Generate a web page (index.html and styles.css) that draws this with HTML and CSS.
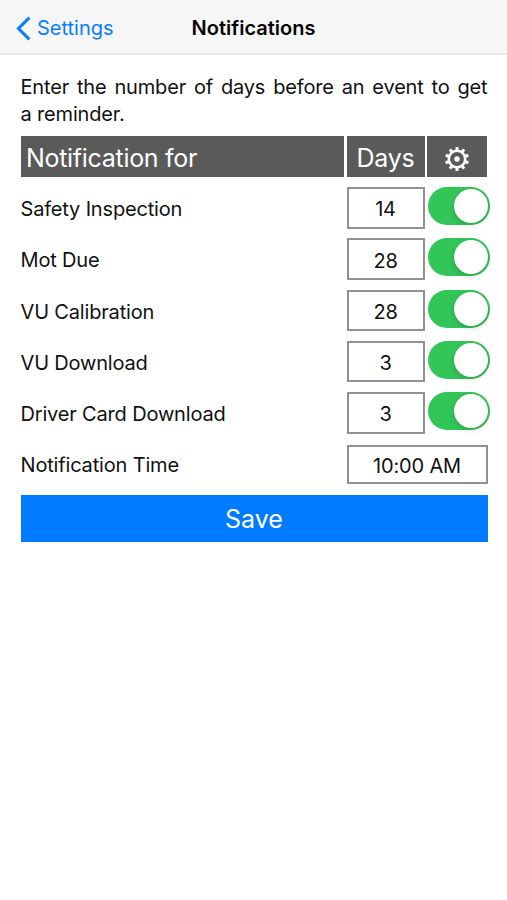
FILE: index.html
```html
<!DOCTYPE html>
<html lang="en">
<head>
<meta charset="utf-8">
<meta name="viewport" content="width=device-width, initial-scale=1">
<title>Notifications</title>
<link rel="stylesheet" href="styles.css">
</head>
<body>
<header class="navbar">
  <a class="back"><svg class="chevron" viewBox="0 0 17 28"><path d="M14.2 2.4 2.6 14l11.6 11.6"/></svg><span>Settings</span></a>
  <h1 class="title">Notifications</h1>
</header>
<main class="content">
  <p class="intro">Enter the number of days before an event to get a&nbsp;reminder.</p>
  <div class="head">
    <div class="cell cell-name">Notification for</div>
    <div class="cell">Days</div>
    <div class="cell">
      <svg class="gear" viewBox="-13 -13 26 26">
        <circle class="ring" r="8.2"/>
        <circle class="hub" r="2.8"/>
        <g class="teeth">
          <path id="tooth" d="M0-8.8V-12"/>
          <use href="#tooth" transform="rotate(36)"/>
          <use href="#tooth" transform="rotate(72)"/>
          <use href="#tooth" transform="rotate(108)"/>
          <use href="#tooth" transform="rotate(144)"/>
          <use href="#tooth" transform="rotate(180)"/>
          <use href="#tooth" transform="rotate(216)"/>
          <use href="#tooth" transform="rotate(252)"/>
          <use href="#tooth" transform="rotate(288)"/>
          <use href="#tooth" transform="rotate(324)"/>
        </g>
      </svg>
    </div>
  </div>
  <div class="rows">
    <div class="row"><span class="label">Safety Inspection</span><div class="box">14</div><div class="switch"><i class="knob"></i></div></div>
    <div class="row"><span class="label">Mot Due</span><div class="box">28</div><div class="switch"><i class="knob"></i></div></div>
    <div class="row"><span class="label">VU Calibration</span><div class="box">28</div><div class="switch"><i class="knob"></i></div></div>
    <div class="row"><span class="label">VU Download</span><div class="box">3</div><div class="switch"><i class="knob"></i></div></div>
    <div class="row"><span class="label">Driver Card Download</span><div class="box">3</div><div class="switch"><i class="knob"></i></div></div>
    <div class="row row-time"><span class="label">Notification Time</span><div class="box box-time">10:00 AM</div></div>
  </div>
  <button class="save">Save</button>
</main>
</body>
</html>
```
FILE: styles.css
```css
* { box-sizing: border-box; }
body {
  margin: 0;
  background: #fff;
  color: #111;
  font: 20px/27px Inter, "Liberation Sans", sans-serif;
  letter-spacing: -0.17px;
}
.navbar {
  display: grid;
  grid-template-columns: 1fr auto 1fr;
  align-items: center;
  height: 55px;
  padding: 3px 16px 0;
  background: #f7f6f7;
  border-bottom: 2px solid #e9e9ea;
}
.back {
  display: flex;
  align-items: center;
  gap: 5px;
  color: #087dff;
  letter-spacing: 0;
}
.chevron {
  width: 16px;
  height: 27px;
  fill: none;
  stroke: #087dff;
  stroke-width: 3.2;
}
.title {
  margin: 0;
  font-size: 20px;
  font-weight: 600;
  color: #050505;
  letter-spacing: 0;
}
.content { padding: 19px 19.5px 0 20.5px; }
.intro {
  margin: 0 0 8px;
  text-align: justify;
}
.head {
  display: grid;
  grid-template-columns: 323.5px 78px 60px;
  gap: 2.5px;
  height: 41px;
}
.cell {
  display: flex;
  align-items: center;
  justify-content: center;
  padding-top: 3px;
  background: #5a5a5a;
  color: #fff;
  font-size: 25px;
  letter-spacing: -0.3px;
}
.cell-name {
  justify-content: flex-start;
  padding-left: 5.5px;
}
.gear {
  width: 26px;
  height: 26px;
  margin-top: 1px;
}
.ring { fill: none; stroke: #fff; stroke-width: 2.6; }
.hub { fill: #fff; }
.teeth { fill: none; stroke: #fff; stroke-width: 3; }
.rows { margin-top: 10px; }
.row {
  display: grid;
  grid-template-columns: 326px 78px 62.5px;
  column-gap: 0;
  height: 51.3px;
}
.row .label { line-height: 44px; }
.box {
  display: flex;
  align-items: center;
  justify-content: center;
  height: 41.5px;
  padding-top: 4px;
  border: 2px solid #919191;
}
.switch {
  display: flex;
  justify-content: flex-end;
  width: 62.5px;
  height: 38px;
  margin-left: 3px;
  padding: 2px;
  border-radius: 19px;
  background: #32c558;
}
.knob {
  width: 34px;
  height: 34px;
  border-radius: 50%;
  background: #fff;
  box-shadow: 0 2px 5px rgba(0, 0, 0, .18);
}
.row-time {
  grid-template-columns: 326px 141px;
  height: 51.5px;
}
.box-time {
  height: 39px;
  margin-top: 1.5px;
}
.save {
  display: block;
  width: 100%;
  height: 47.5px;
  padding: 2px 0 0;
  border: 0;
  background: #007aff;
  color: #fff;
  font: inherit;
  font-size: 25px;
}
```
